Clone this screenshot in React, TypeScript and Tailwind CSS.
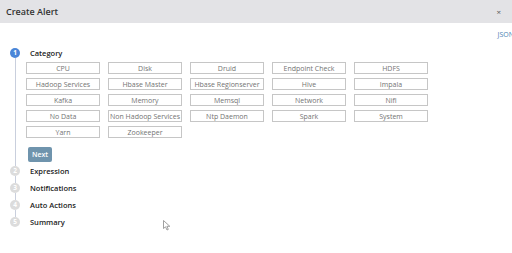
import React from 'react'

const categories = [
  'CPU', 'Disk', 'Druid', 'Endpoint Check', 'HDFS',
  'Hadoop Services', 'Hbase Master', 'Hbase Regionserver', 'Hive', 'Impala',
  'Kafka', 'Memory', 'Memsql', 'Network', 'Nifi',
  'No Data', 'Non Hadoop Services', 'Ntp Daemon', 'Spark', 'System',
  'Yarn', 'Zookeeper',
]

const laterSteps = ['Expression', 'Notifications', 'Auto Actions', 'Summary']

function StepCircle({ n, active }: { n: number; active?: boolean }) {
  return (
    <div
      className={`w-[10px] h-[10px] shrink-0 rounded-full flex items-center justify-center text-[6.5px] font-bold leading-none text-white ${
        active ? 'bg-[#4a86d8]' : 'bg-[#dcdcdc]'
      }`}
    >
      {n}
    </div>
  )
}

export default function App() {
  return (
    <div className="w-[512px] h-[253px] bg-white relative overflow-hidden font-['Open_Sans',sans-serif]">
      {/* Header */}
      <header className="h-[23px] bg-[#e3e3e6] flex items-center justify-between pl-[6px] pr-[11px]">
        <h1 className="text-[9px] font-semibold text-[#333]">Create Alert</h1>
        <span className="text-[8px] text-[#555] leading-none">×</span>
      </header>

      {/* JSON link */}
      <div className="flex justify-end h-[25px] pt-[7px] -mr-[2px]">
        <span className="text-[7px] text-[#4b7fb3] leading-[10px]">JSON</span>
      </div>

      {/* Stepper */}
      <div className="flex flex-col">
        <div className="flex">
          <div className="w-[30px] flex flex-col items-center">
            <StepCircle n={1} active />
            <div className="flex-1 w-px bg-[#c9cfdd]" />
          </div>
          <div className="pb-[4px]">
            <div className="h-[10px] text-[7.5px] font-semibold text-[#222] leading-[10px]">Category</div>
            <div className="grid grid-cols-[repeat(5,74px)] gap-x-[8px] gap-y-[4px] mt-[4px] -ml-[4px]">
              {categories.map((c) => (
                <div
                  key={c}
                  className="h-[12px] border border-[#c6c6c6] flex items-center justify-center text-[7px] text-[#737373] leading-none whitespace-nowrap"
                >
                  {c}
                </div>
              ))}
            </div>
            <button className="mt-[9px] -ml-[2px] w-[24px] h-[15px] bg-[#6f94ad] rounded-[2px] text-white text-[7px] font-semibold leading-none flex items-center justify-center">
              Next
            </button>
          </div>
        </div>

        {laterSteps.map((s, i) => (
          <div key={s} className="flex">
            <div className="w-[30px] flex flex-col items-center">
              <StepCircle n={i + 2} />
              {i < laterSteps.length - 1 && <div className="flex-1 w-px bg-[#c9cfdd]" />}
            </div>
            <div className="h-[17px] text-[7.5px] font-semibold text-[#222] leading-[10px]">{s}</div>
          </div>
        ))}
      </div>

      {/* mouse cursor */}
      <svg className="absolute left-[163px] top-[220px]" width="8" height="11" viewBox="0 0 8 11">
        <path d="M0.5 0.5 L0.5 8.5 L2.5 6.8 L4 10 L5.3 9.4 L3.9 6.3 L6.8 6.3 Z" fill="white" stroke="#888" strokeWidth="0.8" />
      </svg>
    </div>
  )
}
